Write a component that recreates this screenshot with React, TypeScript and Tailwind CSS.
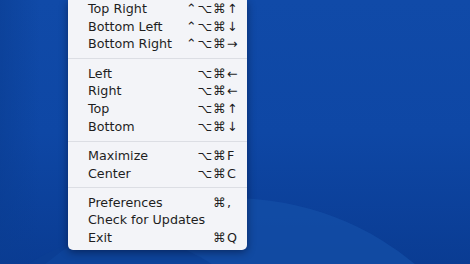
import React from "react";

type Item = { label: string; mods?: string; key?: string };

const sections: Item[][] = [
  [
    { label: "Top Right", mods: "⌃⌥⌘", key: "↑" },
    { label: "Bottom Left", mods: "⌃⌥⌘", key: "↓" },
    { label: "Bottom Right", mods: "⌃⌥⌘", key: "→" },
  ],
  [
    { label: "Left", mods: "⌥⌘", key: "←" },
    { label: "Right", mods: "⌥⌘", key: "←" },
    { label: "Top", mods: "⌥⌘", key: "↑" },
    { label: "Bottom", mods: "⌥⌘", key: "↓" },
  ],
  [
    { label: "Maximize", mods: "⌥⌘", key: "F" },
    { label: "Center", mods: "⌥⌘", key: "C" },
  ],
  [
    { label: "Preferences", mods: "⌘", key: "," },
    { label: "Check for Updates" },
    { label: "Exit", mods: "⌘", key: "Q" },
  ],
];

function Row({ item }: { item: Item }) {
  return (
    <div className="flex h-[17.7px] items-center pl-[20px] pr-[10px] leading-[17.7px]">
      <span className="flex-1 whitespace-nowrap">{item.label}</span>
      {item.key && (
        <span className="flex items-center">
          <span className="whitespace-nowrap text-right tracking-[1px]">{item.mods}</span>
          <span className="w-[10px] text-left">{item.key}</span>
        </span>
      )}
    </div>
  );
}

export default function App() {
  return (
    <div className="relative h-[264px] w-[470px] overflow-hidden bg-gradient-to-b from-[#104aa8] via-[#0e47a5] to-[#0a3c93]">
      {/* desktop wallpaper arc */}
      <div className="absolute left-[-43px] top-[198px] h-[500px] w-[546px] rounded-[50%] bg-[#1450a8] opacity-70" />
      <div className="absolute left-[-60px] top-[236px] h-[400px] w-[360px] rounded-[50%] bg-[#0b3f95] opacity-60" />
      <div className="absolute inset-y-0 left-0 w-[40px] bg-gradient-to-r from-[#0a3d92] to-transparent opacity-60" />

      <div
        className="absolute left-[68px] top-0 w-[179px] rounded-b-[5px] bg-[#f3f4f8] pb-[3px] text-[12.7px] text-[#1e1e1e] shadow-[0_2px_8px_rgba(0,0,20,0.45)]"
        style={{ fontFamily: '"DejaVu Sans", "Liberation Sans", sans-serif' }}
      >
        {sections.map((sec, i) => (
          <div key={i}>
            {i > 0 && (
              <div className="flex h-[11.5px] items-center">
                <div className="h-px w-full bg-[#dcdee4]" />
              </div>
            )}
            {sec.map((it) => (
              <Row key={it.label} item={it} />
            ))}
          </div>
        ))}
      </div>
    </div>
  );
}
